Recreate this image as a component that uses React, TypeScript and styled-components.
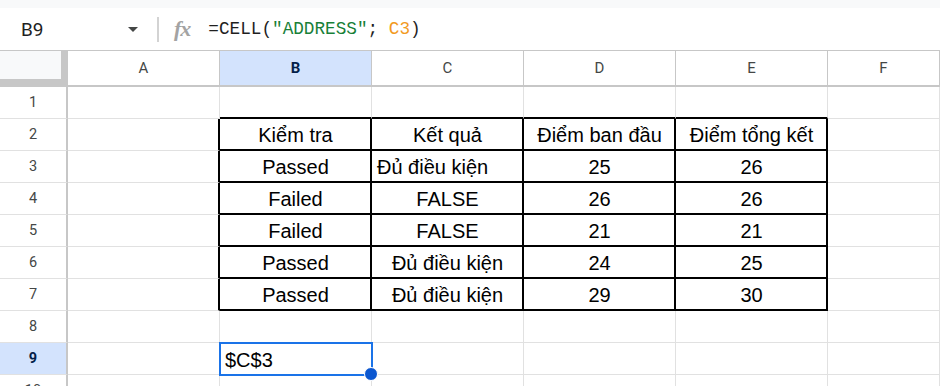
import React from 'react'
import styled, { createGlobalStyle, css } from 'styled-components'

const GlobalStyle = createGlobalStyle`
  html, body {
    margin: 0;
    padding: 0;
    background: #ffffff;
  }
  body {
    font-family: 'Liberation Sans', Arial, sans-serif;
  }
`

const COLS = ['A', 'B', 'C', 'D', 'E', 'F']
const GRID_LINE = '#e1e1e1'
const HEAD_LINE = '#c7c7c7'

type Align = 'left' | 'center'

interface CellData {
  text: string
  align?: Align
}

// rows 1..10, cols A..F
const data: Record<number, Record<number, CellData>> = {
  2: {
    1: { text: 'Kiểm tra' },
    2: { text: 'Kết quả' },
    3: { text: 'Điểm ban đầu' },
    4: { text: 'Điểm tổng kết' },
  },
  3: {
    1: { text: 'Passed' },
    2: { text: 'Đủ điều kiện', align: 'left' },
    3: { text: '25' },
    4: { text: '26' },
  },
  4: {
    1: { text: 'Failed' },
    2: { text: 'FALSE' },
    3: { text: '26' },
    4: { text: '26' },
  },
  5: {
    1: { text: 'Failed' },
    2: { text: 'FALSE' },
    3: { text: '21' },
    4: { text: '21' },
  },
  6: {
    1: { text: 'Passed' },
    2: { text: 'Đủ điều kiện' },
    3: { text: '24' },
    4: { text: '25' },
  },
  7: {
    1: { text: 'Passed' },
    2: { text: 'Đủ điều kiện' },
    3: { text: '29' },
    4: { text: '30' },
  },
  9: {
    1: { text: '$C$3', align: 'left' },
  },
}

const SELECTED = { row: 9, col: 1 }

const Page = styled.div`
  width: 940px;
  height: 386px;
  overflow: hidden;
  background: #ffffff;
`

const TopStrip = styled.div`
  height: 8px;
  background: #f8f9fa;
`

const FormulaBar = styled.div`
  height: 42px;
  display: flex;
  align-items: center;
  border-bottom: 1px solid ${HEAD_LINE};
`

const NameBox = styled.div`
  width: 150px;
  display: flex;
  align-items: center;
  justify-content: space-between;
  padding: 0 12px 0 21px;
  box-sizing: border-box;
  font-family: Roboto, 'Liberation Sans', sans-serif;
  font-size: 19px;
  color: #1f1f1f;
`

const Caret = styled.span`
  width: 0;
  height: 0;
  border-left: 5px solid transparent;
  border-right: 5px solid transparent;
  border-top: 5px solid #444746;
`

const Divider = styled.span`
  width: 2px;
  height: 25px;
  background: #d3d3d3;
  margin: 0 15px 0 7px;
`

const FxLabel = styled.span`
  font-family: 'Liberation Serif', 'DejaVu Serif', serif;
  font-style: italic;
  font-weight: 700;
  font-size: 22px;
  color: #a3a3a3;
  letter-spacing: -1px;
  margin-right: 18px;
`

const Formula = styled.div`
  font-family: 'Liberation Mono', 'DejaVu Sans Mono', monospace;
  font-size: 17.7px;
  color: #1f1f1f;
  white-space: pre;
`

const Token = styled.span<{ $color: string }>`
  color: ${(p) => p.$color};
`

const Sheet = styled.div`
  display: grid;
  grid-template-columns: 68px repeat(5, 152px) 112px;
  grid-template-rows: 36px repeat(10, 32px);
`

const Corner = styled.div`
  background: #f8f9fa;
  border-right: 7px solid ${HEAD_LINE};
  border-bottom: 8px solid ${HEAD_LINE};
  box-sizing: border-box;
`

const ColHeader = styled.div<{ $active?: boolean }>`
  display: flex;
  align-items: center;
  justify-content: center;
  box-sizing: border-box;
  border-right: 1px solid ${HEAD_LINE};
  border-bottom: 2px solid ${HEAD_LINE};
  font-family: Roboto, 'Liberation Sans', sans-serif;
  font-size: 15px;
  color: #444746;
  background: ${(p) => (p.$active ? '#d3e3fd' : '#ffffff')};
  ${(p) =>
    p.$active &&
    css`
      font-weight: 700;
      color: #041e49;
    `}
`

const RowHeader = styled.div<{ $active?: boolean }>`
  display: flex;
  align-items: center;
  justify-content: center;
  box-sizing: border-box;
  border-right: 2px solid ${HEAD_LINE};
  border-bottom: 1px solid ${GRID_LINE};
  font-family: Roboto, 'Liberation Sans', sans-serif;
  font-size: 14.5px;
  color: #444746;
  background: ${(p) => (p.$active ? '#d3e3fd' : '#ffffff')};
  ${(p) =>
    p.$active &&
    css`
      font-weight: 700;
      color: #041e49;
    `}
`

const Cell = styled.div<{
  $align: Align
  $right: string
  $bottom: string
  $selected?: boolean
}>`
  position: relative;
  display: flex;
  align-items: flex-end;
  justify-content: ${(p) => (p.$align === 'left' ? 'flex-start' : 'center')};
  box-sizing: border-box;
  padding: 0 4px 2px 5px;
  border-right: ${(p) => p.$right};
  border-bottom: ${(p) => p.$bottom};
  font-family: 'Liberation Sans', Arial, sans-serif;
  font-size: 20px;
  line-height: 23px;
  color: #000000;
  white-space: nowrap;
  ${(p) =>
    p.$selected &&
    css`
      z-index: 1;
      outline: 2px solid #1a73e8;
      outline-offset: -1px;
    `}
`

const FillHandle = styled.span`
  position: absolute;
  right: -7px;
  bottom: -7px;
  width: 12px;
  height: 12px;
  border-radius: 50%;
  background: #0b57d0;
  border: 1px solid #ffffff;
  box-sizing: content-box;
`

const inTable = (r: number, c: number) => r >= 2 && r <= 7 && c >= 1 && c <= 4

function borders(r: number, c: number) {
  const thin = `1px solid ${GRID_LINE}`
  const thick = '2px solid #000000'
  const right = inTable(r, c) || inTable(r, c + 1) ? thick : thin
  const bottom = inTable(r, c) || inTable(r + 1, c) ? thick : thin
  return { right, bottom }
}

export default function App() {
  const rows = Array.from({ length: 10 }, (_, i) => i + 1)

  return (
    <Page>
      <GlobalStyle />
      <TopStrip />
      <FormulaBar>
        <NameBox>
          <span>B9</span>
          <Caret />
        </NameBox>
        <Divider />
        <FxLabel>fx</FxLabel>
        <Formula>
          =CELL(<Token $color="#188038">"ADDRESS"</Token>; <Token $color="#f29a1f">C3</Token>)
        </Formula>
      </FormulaBar>
      <Sheet>
        <Corner />
        {COLS.map((col, c) => (
          <ColHeader key={col} $active={c === SELECTED.col}>
            {col}
          </ColHeader>
        ))}
        {rows.map((r) => (
          <React.Fragment key={r}>
            <RowHeader $active={r === SELECTED.row}>{r}</RowHeader>
            {COLS.map((col, c) => {
              const cell = data[r]?.[c]
              const { right, bottom } = borders(r, c)
              const selected = r === SELECTED.row && c === SELECTED.col
              return (
                <Cell
                  key={col}
                  $align={cell?.align ?? 'center'}
                  $right={right}
                  $bottom={bottom}
                  $selected={selected}
                >
                  {cell?.text}
                  {selected && <FillHandle />}
                </Cell>
              )
            })}
          </React.Fragment>
        ))}
      </Sheet>
    </Page>
  )
}
